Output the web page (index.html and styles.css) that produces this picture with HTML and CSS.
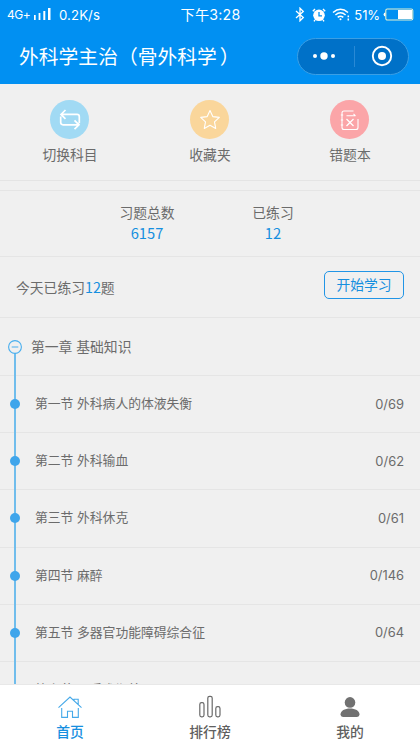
FILE: index.html
```html
<!DOCTYPE html>
<html lang="zh-CN">
<head>
<meta charset="utf-8">
<title>外科学主治</title>
<link rel="stylesheet" href="styles.css">
</head>
<body>
<div class="app">
  <header class="header">
    <div class="status">
      <div class="status-left">
        <span class="network">4G+</span>
        <svg class="signal" width="17" height="13" viewBox="0 0 17 13" fill="#fff"><rect x="0" y="7" width="1.7" height="5"/><rect x="4.6" y="5" width="1.8" height="7"/><rect x="9.3" y="3" width="2" height="9"/><rect x="14" y="0" width="2.5" height="12"/></svg>
        <span class="speed">0.2K/s</span>
      </div>
      <div class="time">下午3:28</div>
      <div class="status-right">
        <svg class="bluetooth" width="10" height="15" viewBox="0 0 10 15" fill="none" stroke="#fff" stroke-width="1.3"><path d="M1 4l7.3 6.5L5 13.8V1.2l3.3 3.3L1 11"/></svg>
        <svg class="alarm" width="14" height="14" viewBox="0 0 14 14"><circle cx="7" cy="7.3" r="5.8" fill="#fff"/><path d="M.8 3.2L3 1M13.2 3.2L11 1M3 12l-1 1.4M11 12l1 1.4" stroke="#fff" stroke-width="1.4"/><path d="M7 4v3.8h3" fill="none" stroke="#0190f2" stroke-width="1.3"/></svg>
        <svg class="wifi" width="18" height="13" viewBox="0 0 18 13" fill="none" stroke="#fff" stroke-width="1.5"><path d="M1 4.5q7.5-6.5 15 0M3.4 7q5.1-4.4 10.2 0M5.7 9.4q2.8-2.4 5.6 0"/><circle cx="8.5" cy="11.2" r="1" fill="#fff" stroke="none"/><path d="M16.3 7.5v1.7M16.3 10.5v2"/></svg>
        <span class="percent">51%</span>
        <svg class="battery" width="31" height="13" viewBox="0 0 31 13"><path d="M2.5 4.5Q.6 4.5.6 6.5t1.9 2" fill="#fff"/><rect x="2.8" y="1" width="27" height="11" rx="1.5" fill="none" stroke="#e2efcf" stroke-width="1.1"/><rect x="15" y="2" width="14" height="9" fill="#fff"/></svg>
      </div>
    </div>
    <div class="titlebar">
      <h1>外科学主治（骨外科学<span class="close">）</span></h1>
      <div class="capsule">
        <svg width="24" height="10" viewBox="0 0 24 10" fill="#fff"><circle cx="3" cy="5" r="2"/><circle cx="12" cy="5" r="3.7"/><circle cx="21" cy="5" r="2"/></svg>
        <span class="capsule-divider"></span>
        <svg width="22" height="22" viewBox="0 0 22 22"><circle cx="11" cy="11" r="9.2" fill="none" stroke="#fff" stroke-width="1.9"/><circle cx="11" cy="11" r="4" fill="#fff"/></svg>
      </div>
    </div>
  </header>

  <nav class="shortcuts">
    <a class="shortcut">
      <span class="disc blue"><svg width="24" height="24" viewBox="0 0 24 24" fill="none" stroke="#fff" stroke-width="1.7"><path d="M7.5 2L3 6.4l4.5 4.4M3 6.4h16q2.3 0 2.3 2.3v6.5M16.5 12.4l4.5 4.4-4.5 4.4M21 16.8H5q-2.3 0-2.3-2.3V8.5"/></svg></span>
      <span>切换科目</span>
    </a>
    <a class="shortcut">
      <span class="disc yellow"><svg width="24" height="24" viewBox="0 0 24 24" fill="none" stroke="#fff" stroke-width="1.1" stroke-linejoin="round"><path d="M12 2.6l2.8 6 6.5.8-4.8 4.5 1.2 6.5-5.7-3.2-5.7 3.2 1.2-6.5-4.8-4.5 6.5-.8z"/></svg></span>
      <span>收藏夹</span>
    </a>
    <a class="shortcut">
      <span class="disc red"><svg width="24" height="24" viewBox="0 0 24 24" fill="none" stroke="#fff" stroke-width="1.1"><path d="M15.5 3H6q-2 0-2 2v14.5q0 2 2 2h12q2 0 2-2V11M2.8 7h2.4M2.8 12h2.4M2.8 17h2.4M8.5 7.8h9M15.5 5.8l2 2"/><path d="M8.5 11l7 7M15.5 11l-7 7" stroke-width="1.3"/></svg></span>
      <span>错题本</span>
    </a>
  </nav>

  <section class="stats">
    <div class="stat"><span>习题总数</span><b>6157</b></div>
    <div class="stat"><span>已练习</span><b>12</b></div>
  </section>

  <section class="today">
    <p>今天已练习<b>12</b>题</p>
    <button class="start">开始学习</button>
  </section>

  <main class="outline">
    <div class="row chapter"><span class="rail"><svg width="14" height="14" viewBox="0 0 14 14" fill="#f0f0f0" stroke="#48aeee"><circle cx="7" cy="7" r="6.4" stroke-width="1.1"/><path d="M3.7 7h6.6"/></svg></span><span class="name">第一章 基础知识</span></div>
    <div class="row"><span class="rail"><i class="dot"></i></span><span class="name">第一节 外科病人的体液失衡</span><span class="count">0/69</span></div>
    <div class="row"><span class="rail"><i class="dot"></i></span><span class="name">第二节 外科输血</span><span class="count">0/62</span></div>
    <div class="row"><span class="rail"><i class="dot"></i></span><span class="name">第三节 外科休克</span><span class="count">0/61</span></div>
    <div class="row"><span class="rail"><i class="dot"></i></span><span class="name">第四节 麻醉</span><span class="count">0/146</span></div>
    <div class="row"><span class="rail"><i class="dot"></i></span><span class="name">第五节 多器官功能障碍综合征</span><span class="count">0/64</span></div>
    <div class="row"><span class="rail"><i class="dot"></i></span><span class="name">第六节 围手术期处理</span></div>
  </main>

  <footer class="tabs">
    <a class="tab active">
      <svg width="26" height="24" viewBox="0 0 26 24" fill="none" stroke="#45a9e9" stroke-width="1.1"><path d="M1.5 12.7L13 2l11.5 10.7M17 5.5V4.2h4.2v5.2M4.7 13v9.4h5.8v-6.2h5v6.2h5.8V13"/></svg>
      <span>首页</span>
    </a>
    <a class="tab">
      <svg width="26" height="24" viewBox="0 0 26 24" fill="none" stroke="#6a6a6a" stroke-width="1.2"><rect x="2.8" y="7.6" width="4.2" height="14.2" rx="1.8"/><rect x="10.8" y="1.3" width="4.4" height="20.5" rx="1.8"/><rect x="18.8" y="11.6" width="4.2" height="10.2" rx="1.8"/></svg>
      <span>排行榜</span>
    </a>
    <a class="tab">
      <svg width="26" height="24" viewBox="0 0 26 24" fill="#717171"><circle cx="13" cy="7.4" r="5.3"/><path d="M3.5 19.5C3.5 15.8 7.8 13.5 13 13.5s9.5 2.3 9.5 6q0 2.4-2.5 2.4H6q-2.5 0-2.5-2.4z"/></svg>
      <span>我的</span>
    </a>
  </footer>
</div>
</body>
</html>
```
FILE: styles.css
```css
* { box-sizing: border-box; }
body {
  margin: 0;
  font-family: Inter, "Noto Sans CJK SC", sans-serif;
  color: #6b6b6b;
  background: #f0f0f0;
}
b { font-weight: 400; color: #168fdf; }
svg { display: block; flex: none; }
.app {
  width: 420px;
  height: 747px;
  display: flex;
  flex-direction: column;
  overflow: hidden;
}

.header { height: 84px; flex: none; background: #0190f2; color: #fff; }
.status {
  height: 29px;
  display: grid;
  grid-template-columns: 1fr auto 1fr;
  align-items: center;
  padding: 0 6px 0 7px;
}
.status-left, .status-right { display: flex; align-items: center; }
.status-right { justify-content: flex-end; }
.network { width: 27px; font-size: 12px; letter-spacing: -0.5px; }
.speed { margin-left: 8px; font-size: 13.2px; letter-spacing: 0.1px; }
.time { font-size: 14.2px; line-height: 28px; letter-spacing: 0.2px; }
.alarm { margin-left: 7px; }
.wifi { margin-left: 6px; }
.percent { margin-left: 4px; font-size: 13px; letter-spacing: -0.1px; }
.battery { margin-left: 3px; }
.titlebar {
  height: 54px;
  display: flex;
  align-items: center;
  justify-content: space-between;
  padding: 0 11px 0 19px;
}
h1 { margin: 0; padding-top: 2px; font-size: 19.8px; font-weight: 400; line-height: 28px; white-space: nowrap; }
.close { margin-left: 3px; }
.capsule {
  width: 112px;
  height: 37px;
  display: flex;
  align-items: center;
  justify-content: space-between;
  padding: 0 15px 0 14px;
  border: 1px solid #3b9fe5;
  border-radius: 19px;
  background: #0071c8;
}
.capsule-divider { width: 1px; height: 21px; margin-left: 2px; background: #2989d5; }

.shortcuts {
  height: 97px;
  flex: none;
  display: grid;
  grid-template-columns: repeat(3, 1fr);
  padding-top: 16px;
  border-bottom: 1px solid #e4e4e4;
}
.shortcut, .stat, .tab { display: flex; flex-direction: column; align-items: center; }
.shortcut { font-size: 13.8px; line-height: 20px; gap: 6px; }
.disc {
  width: 39px;
  height: 39px;
  display: flex;
  align-items: center;
  justify-content: center;
  margin-right: 1px;
  border-radius: 50%;
}
.blue { background: #a1daf4; }
.yellow { background: #fad69b; }
.red { background: #fba5a8; }

.stats {
  height: 67px;
  flex: none;
  display: grid;
  grid-template-columns: 126px 126px;
  justify-content: center;
  margin-top: 9px;
  padding-top: 12px;
  border-top: 1px solid #e5e5e5;
  border-bottom: 1px solid #e5e5e5;
}
.stat { font-size: 13.8px; line-height: 20px; }
.stat b { font: 14.7px/20px "Noto Sans CJK SC", sans-serif; }

.today {
  height: 61px;
  flex: none;
  display: flex;
  align-items: center;
  justify-content: space-between;
  padding: 0 16px;
  border-bottom: 1px solid #e5e5e5;
}
.today p { margin: 0; font-size: 13.8px; line-height: 20px; }
.today b { font: 14.3px/20px "Noto Sans CJK SC", sans-serif; }
.start {
  width: 80px;
  height: 28px;
  margin-bottom: 4px;
  padding: 0;
  border: 1.5px solid #2195e6;
  border-radius: 5px;
  background: transparent;
  font: 13.8px/25px Inter, "Noto Sans CJK SC", sans-serif;
  color: #168fdf;
}

.outline { flex: 1; min-height: 0; overflow: hidden; }
.row {
  height: 57.2px;
  display: flex;
  align-items: center;
  padding: 0 16px 0 7px;
  border-bottom: 1px solid #e5e5e5;
  font-size: 12.8px;
}
.chapter { height: 58px; }
.rail {
  width: 16px;
  height: 57.2px;
  flex: none;
  display: flex;
  align-items: center;
  justify-content: center;
  background: linear-gradient(#70bdec, #70bdec) center / 2px 100% no-repeat;
}
.chapter .rail { height: 58px; background-position: center bottom; background-size: 2px 50%; }
.dot { width: 10px; height: 10px; border-radius: 50%; background: #3fa5eb; }
.name { flex: 1; padding-left: 12px; line-height: 20px; }
.chapter .name { padding-left: 8px; font-size: 13.8px; }
.count { font-size: 12.9px; }

.tabs {
  height: 63px;
  flex: none;
  display: grid;
  grid-template-columns: repeat(3, 1fr);
  padding-top: 10px;
  border-top: 1px solid #e8e8e8;
  background: #fff;
}
.tab { font-size: 13.8px; font-weight: 500; line-height: 20px; gap: 3px; color: #606060; }
.tab svg { margin-right: 1px; }
.active { color: #168fdf; }
```
